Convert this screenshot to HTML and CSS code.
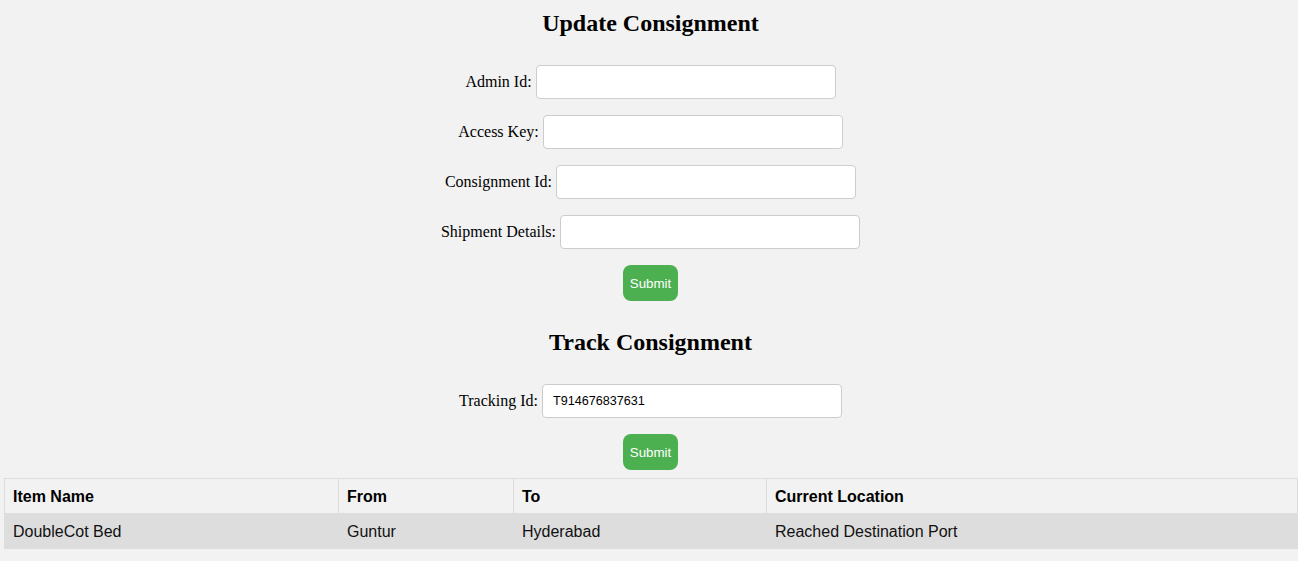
FILE: index.html
```html
<!DOCTYPE html>
<html>
<head>
<meta charset="utf-8">
<title>Consignment</title>
<link rel="stylesheet" href="styles.css">
</head>
<body>
<section class="panel panel-update">
  <h2 class="title">Update Consignment</h2>
  <div class="row"><label>Admin Id:</label> <input class="field" type="text"></div>
  <div class="row"><label>Access Key:</label> <input class="field" type="text"></div>
  <div class="row"><label>Consignment Id:</label> <input class="field" type="text"></div>
  <div class="row"><label>Shipment Details:</label> <input class="field" type="text"></div>
  <button class="btn">Submit</button>
</section>
<section class="panel panel-track">
  <h2 class="title">Track Consignment</h2>
  <div class="row"><label>Tracking Id:</label> <input class="field" type="text" value="T914676837631"></div>
  <button class="btn">Submit</button>
</section>
<table class="results">
  <colgroup>
    <col class="c1"><col class="c2"><col class="c3"><col class="c4">
  </colgroup>
  <thead>
    <tr><th>Item Name</th><th>From</th><th>To</th><th>Current Location</th></tr>
  </thead>
  <tbody>
    <tr><td>DoubleCot Bed</td><td>Guntur</td><td>Hyderabad</td><td>Reached Destination Port</td></tr>
  </tbody>
</table>
</body>
</html>
```

FILE: styles.css
```css
html, body {
  margin: 0;
  padding: 0;
  background: #f2f2f2;
}
body {
  font-family: "Liberation Serif", "Times New Roman", serif;
  font-size: 16px;
  color: #000;
}
.panel {
  display: flex;
  flex-direction: column;
  align-items: center;
  padding-left: 3px;
}
.panel-update {
  padding-top: 9px;
}
.panel-track {
  padding-top: 27px;
}
.title {
  margin: 0 0 28px;
  font-size: 24px;
  line-height: 28px;
  font-weight: bold;
}
.row {
  display: flex;
  align-items: center;
  gap: 4px;
  margin-bottom: 16px;
  white-space: nowrap;
}
.row label {
  font-size: 16px;
}
.field {
  box-sizing: border-box;
  width: 300px;
  height: 34px;
  padding: 8px 10px;
  border: 1px solid #ccc;
  border-radius: 4px;
  background: #fff;
  font-family: "Liberation Sans", Arial, sans-serif;
  font-size: 12.6px;
  color: #000;
  outline: none;
}
.btn {
  box-sizing: border-box;
  height: 36px;
  padding: 0 7px;
  border: none;
  border-radius: 8px;
  background: #4caf50;
  color: #fff;
  font-family: "Liberation Sans", Arial, sans-serif;
  font-size: 13.33px;
  cursor: pointer;
}
.panel-track .btn {
  margin-bottom: 8px;
}
.results {
  margin-left: 4px;
  width: 1293px;
  border-collapse: collapse;
  table-layout: fixed;
  font-family: "Liberation Sans", Arial, sans-serif;
  font-size: 16px;
}
.c1 { width: 334px; }
.c2 { width: 175px; }
.c3 { width: 253px; }
.c4 { width: 531px; }
.results th, .results td {
  border: 1px solid #ddd;
  padding: 9px 8px 7px;
  text-align: left;
  line-height: 18px;
}
.results th {
  font-weight: bold;
  background: #f2f2f2;
}
.results td {
  background: #ddd;
  color: #111;
}
```
